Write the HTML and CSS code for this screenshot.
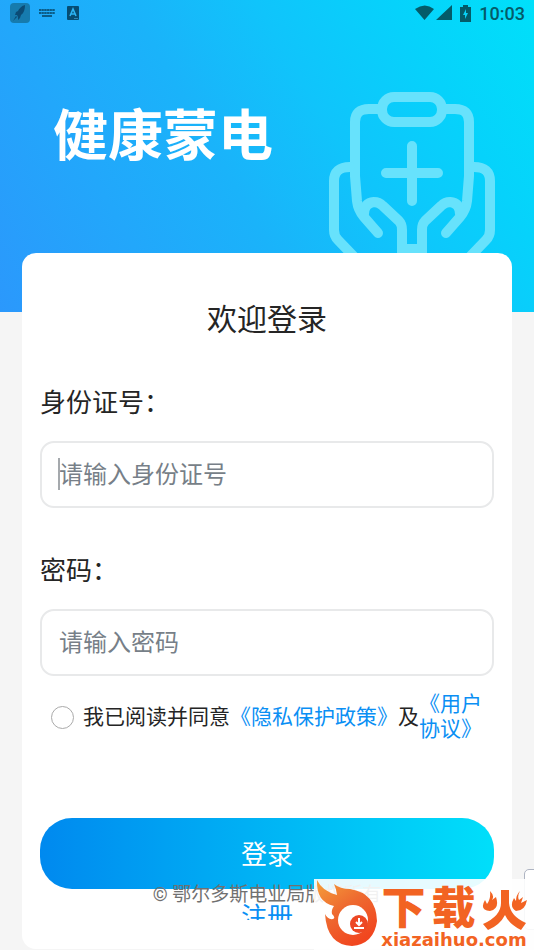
FILE: index.html
```html
<!DOCTYPE html>
<html lang="zh-CN">
<head>
<meta charset="utf-8">
<meta name="viewport" content="width=device-width, initial-scale=1">
<title>健康蒙电</title>
<link rel="stylesheet" href="styles.css">
</head>
<body>
<div class="page">
  <header class="hero">
    <div class="status">
      <div class="status-group">
        <svg width="20" height="20" viewBox="0 0 20 20"><rect width="20" height="20" rx="4" fill="#167bae"/><path d="M15 2c-4 1-6 4-7 6l-2 1-1 3 2 0 1 2 0 3 2-2 1-3c3-2 4-6 4-10zM6 13l-3 5 4-4z" fill="#0b4b75"/></svg>
        <svg width="16" height="10" viewBox="0 0 16 10" fill="none" stroke="#0b5c88"><path d="M0 2h16M0 5h16" stroke-width="2" stroke-dasharray="2 .7"/><path d="M0 2h16M0 5h16"/><path d="M3 8h10" stroke-width="2"/></svg>
        <svg width="12" height="14" viewBox="0 0 12 14"><rect width="12" height="14" rx="1" fill="#064d73"/><path d="M3 10l3-7 3 7M4 8h4" fill="none" stroke="#2bb4f4" stroke-width="1.6"/><path d="M7 12.500h4" stroke="#2b84b4"/></svg>
      </div>
      <div class="status-group status-right">
        <svg width="48" height="18" viewBox="0 0 48 18"><path d="M0 5Q10-2 19 5L9.500 16zM37 1v15H21z" fill="#045b69"/></svg>
        <svg class="battery" width="11" height="17" viewBox="0 0 11 17"><path d="M3 0h5v2h3v15H0V2h3z" fill="#045b69"/><path d="M6 4L3 10h2v4l3-6H6z" fill="#08cff4"/></svg>
        <span>10:03</span>
      </div>
    </div>
    <div class="banner">
      <h1>健康蒙电</h1>
      <svg class="art" width="170" height="176" viewBox="0 0 170 176" fill="none" stroke="#67e2fc" stroke-width="10" stroke-linecap="round" stroke-linejoin="round">
        <rect x="54" y="5" width="60" height="25" rx="12"/>
        <path d="M54 17H41Q27 17 27 30V84L29 109Q30 118 36 125L50 141M114 17H127Q141 17 141 30V84L139 109Q138 118 132 125L118 141M84 54V109M58 81H110"/>
        <path d="M22 75Q6 75 6 89V138Q6 144 10 148L34 173M146 75Q162 75 162 89V138Q162 144 158 148L134 173"/>
        <path d="M36 122Q36 111 46 110Q51 110 55 114L71 129Q74 132 74 138V184M132 122Q132 111 122 110Q117 110 113 114L97 129Q94 132 94 138V184M74 157H94"/>
      </svg>
    </div>
  </header>

  <main class="card">
    <form>
      <h2>欢迎登录</h2>
      <label for="id-number">身份证号：</label>
      <div class="field focused"><input id="id-number" type="text" placeholder="请输入身份证号"></div>
      <label for="password">密码：</label>
      <div class="field"><input id="password" type="password" placeholder="请输入密码"></div>
      <div class="agreement">
        <input id="agree" type="checkbox">
        <label for="agree">我已阅读并同意</label>
        <a href="#privacy">《隐私保护政策》</a>
        <span>及</span>
        <a class="terms" href="#terms">《用户协议》</a>
      </div>
      <button class="login" type="button">登录</button>
      <a class="register" href="#register">注册</a>
    </form>
  </main>

  <footer class="copyright">© 鄂尔多斯电业局版权所有</footer>
  <div class="side-tab"></div>
  <aside class="watermark">
    <svg class="flame" width="64" height="69" viewBox="0 0 64 69">
      <defs><linearGradient id="fire" x1="0" y1="0" x2=".6" y2="1"><stop offset="0" stop-color="#f5a03a"/><stop offset=".5" stop-color="#ee6a30"/><stop offset="1" stop-color="#f1461f"/></linearGradient></defs>
      <path d="M3 1Q8 12 23 16Q22 9 20 5Q26 10 36 10Q62 14 63 42Q60 65 38 67Q13 66 11 35Q14 41 19 40Q22 39 18 35Q17 31 20 27Q2 23 3 1z" fill="url(#fire)"/>
      <circle cx="39" cy="41" r="15" fill="#fff"/><circle cx="45" cy="45" r="9" fill="#ed4824"/>
      <path d="M45 39v7M42 43l3 3 3-3M40 49h10" stroke="#fff" stroke-width="2" fill="none"/>
    </svg>
    <div class="brand">
      <div class="brand-name"><span>下</span><span>载</span><svg width="45" height="40" viewBox="0 0 45 40" fill="#f26322"><path d="M19 0h8v13q1 13 17 20l-5 7q-12-6-16-15q-5 10-17 15L1 34Q19 26 19 13z"/><path d="M8 1q5 5 2 9l4-3q4 12-6 14Q-3 20 3 10l2 4q4-5 3-13zM38 1q-3 5-1 9l4-3-2 6 6-3q-2 11-11 11-7-4-2-13l2 3q0-6 4-10z"/></svg></div>
      <div class="brand-url">xiazaihuo.com</div>
    </div>
  </aside>
</div>
</body>
</html>
```

FILE: styles.css
```css
* { box-sizing: border-box; }

body {
  margin: 0;
  background: #f5f5f5;
  color: #252525;
  font-family: Roboto, "Noto Sans CJK SC", sans-serif;
}

.page {
  position: relative;
  min-height: 100vh;
  overflow: hidden;
}

.hero {
  height: 312px;
  background: linear-gradient(60deg, #2b98fc 0%, #22a7fb 24%, #1ab3fa 43%, #10c4fb 61%, #06d2fb 80%, #00e0fa 100%);
}

.status {
  display: flex;
  justify-content: space-between;
  align-items: center;
  height: 26px;
  padding: 0 9px 0 10px;
}

.status-group {
  display: flex;
  align-items: center;
  gap: 12px;
}

.status-group svg:nth-child(2) { margin-left: -3px; }

.status-right {
  gap: 0;
  color: #045b69;
  font-size: 18px;
  font-weight: 500;
}

.status-right .battery { margin: 0 8px 0 0; }

.banner {
  display: flex;
  justify-content: space-between;
  padding: 66px 36px 0 53px;
}

h1 {
  margin: 0;
  color: #fff;
  font-size: 55px;
  font-weight: 700;
  line-height: 88px;
}

.art { flex: none; }

.card {
  position: relative;
  margin: -59px 22px 0;
  padding: 44px 18px 29px;
  border-radius: 14px;
  background: #fff;
}

form {
  display: flex;
  flex-direction: column;
}

h2 {
  margin: 0 0 40px;
  font-size: 30px;
  font-weight: 400;
  line-height: 46px;
  text-align: center;
}

form > label {
  margin-bottom: 18px;
  font-size: 26px;
  line-height: 40px;
}

.field {
  position: relative;
  height: 67px;
  margin-bottom: 43px;
}

.field input {
  width: 100%;
  height: 100%;
  padding: 0 17px;
  border: 2px solid #e8e9ea;
  border-radius: 14px;
  background: #fff;
  color: #252525;
  font: inherit;
  font-size: 24px;
  outline: none;
}

.field input::placeholder { color: #777f88; opacity: 1; }

.focused::before {
  content: "";
  position: absolute;
  left: 18px;
  top: 17px;
  width: 2px;
  height: 32px;
  background: #a5a9ad;
}

.agreement {
  display: flex;
  align-items: center;
  height: 52px;
  margin: -28px 10px 75px 11px;
  font-size: 21px;
  line-height: 25px;
}

.agreement > * { flex: none; }

.agreement input {
  appearance: none;
  width: 23px;
  height: 23px;
  margin: 0 9px 0 0;
  border: 1px solid #aaa;
  border-radius: 50%;
}

a {
  color: #0a8ff4;
  text-decoration: none;
}

.agreement .terms { flex: 1 1 0; }

.login {
  height: 71px;
  padding: 0 0 2px;
  border: 0;
  border-radius: 32px;
  background: linear-gradient(90deg, #0089ef, #00dffa);
  color: #fff;
  font: inherit;
  font-size: 26px;
}

.register {
  height: 31px;
  overflow: hidden;
  font-size: 26px;
  line-height: 56px;
  text-align: center;
}

.copyright {
  position: absolute;
  right: 0;
  bottom: 41px;
  left: 0;
  color: #707070;
  font-size: 19px;
  line-height: 28px;
  text-align: center;
}

.side-tab {
  position: absolute;
  right: -8px;
  bottom: 20px;
  width: 18px;
  height: 61px;
  border: 1px solid #aeb4c2;
  border-radius: 5px;
  background: #fff;
}

.watermark {
  position: absolute;
  right: 0;
  bottom: 0;
  display: flex;
  width: 220px;
  height: 71px;
  background: rgba(255, 255, 255, .9);
}

.flame { flex: none; }

.brand {
  flex: none;
  display: flex;
  flex-direction: column;
  align-items: center;
  width: 152px;
  padding-top: 11px;
  color: #f26322;
}

.brand-name {
  display: flex;
  align-items: center;
  gap: 6px;
  height: 40px;
  font-size: 44px;
  font-weight: 900;
  line-height: 38px;
}

.brand-name span { height: 40px; }

.brand-url {
  font-family: "DejaVu Sans", sans-serif;
  font-size: 18px;
  font-weight: 700;
  line-height: 20px;
}
```
